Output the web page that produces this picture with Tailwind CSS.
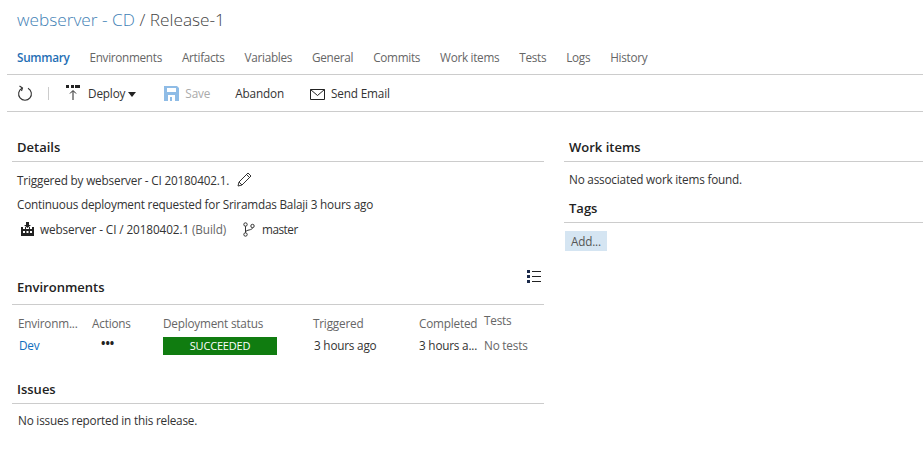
<!DOCTYPE html>
<html lang="en">
<head>
  <meta charset="UTF-8" />
  <title>webserver - CD / Release-1</title>
  <script src="https://cdn.jsdelivr.net/npm/@tailwindcss/browser@4"></script>
</head>
<body class="bg-white font-['Open_Sans',sans-serif] text-[11.75px] text-[#333] h-[452px] overflow-hidden">

<div class="pl-[17px] pt-[9px] h-[44px] text-[17.25px] leading-[22px] font-light text-[#444]">
  <span class="text-[#3f7fb5]">webserver - CD</span> / Release-1
</div>

<div class="ml-[7px] h-[31px] border-b border-[#ccc] pl-[10px] flex gap-[20px] items-start pt-[4px] leading-[18px] tracking-[-0.3px] text-[#666]">
  <span class="font-semibold text-[#1f6fb5]">Summary</span>
  <span>Environments</span>
  <span>Artifacts</span>
  <span>Variables</span>
  <span>General</span>
  <span>Commits</span>
  <span>Work items</span>
  <span>Tests</span>
  <span>Logs</span>
  <span>History</span>
</div>

<div class="ml-[7px] h-[37px] border-b border-[#ccc] flex items-center pt-[2px] tracking-[-0.15px]">
  <svg class="ml-[10px] -mt-[2px] w-[16px] h-[16px]" viewBox="0 0 16 16" fill="none" stroke="#333" stroke-width="1.100"><path d="M5 3.200A6.400 6.400 0 1 0 11 3.200"/><path d="M2.500 1 5.500 3 4.500 6"/></svg>
  <span class="ml-[15px] -mt-[2px] w-px h-[13px] bg-[#ccc]"></span>
  <svg class="ml-[17px] -mt-[2px] w-[15px] h-[16px]" viewBox="0 0 15 16"><path fill="#222" d="M0 0h3v3H0zM5 0h3v3H5zM9 0h5v3H9z"/><path stroke="#222" fill="none" d="M7 15V6M4 8.500l3-3 3 3"/></svg>
  <span class="ml-[7px]">Deploy</span>
  <svg class="ml-[3px] w-[8px] h-[5px]" viewBox="0 0 8 5"><path fill="#222" d="M0 0h8L4 5z"/></svg>
  <svg class="ml-[28px] -mt-[1px] w-[15px] h-[15px]" viewBox="0 0 15 15"><path fill="#8fbce6" d="M0 0h13l2 2v13H0z"/><path fill="#fff" d="M3 2h9v4H3zM4 9h7v6H4z"/><path fill="#8fbce6" d="M6 11h2v4H6z"/></svg>
  <span class="ml-[6px] text-[#aaa]">Save</span>
  <span class="ml-[25px]">Abandon</span>
  <svg class="ml-[26px] w-[15px] h-[11px]" viewBox="0 0 15 11" fill="none" stroke="#222"><path d="M.5.5h14v10H.5zM.5.5l7 6 7-6"/></svg>
  <span class="ml-[6px]">Send Email</span>
</div>

<div class="flex">
  <div class="w-[532px] ml-[12px] shrink-0">
    <h2 class="pl-[5px] pt-[26px] pb-[5px] border-b border-[#ccc] text-[13px] leading-[18px] font-semibold text-[#222]">Details</h2>
    <div class="pl-[5px] pt-[9px] leading-[18px] tracking-[-0.2px]">
      <div class="flex items-center h-[18px]"><span class="tracking-[-0.17px]">Triggered by webserver - CI 20180402.1.</span>
        <svg class="ml-[8px] -mt-[1px] w-[15px] h-[15px]" viewBox="0 0 15 15" fill="none" stroke="#333"><path d="M1 14l1-4L11 1l3 3-9 9zM2 10l3 3M9.500 2.500l3 3"/></svg>
      </div>
      <div class="mt-[6px] h-[18px]">Continuous deployment requested for Sriramdas Balaji 3 hours ago</div>
      <div class="mt-[7px] flex items-center h-[18px]">
        <svg class="ml-[4px] w-[13px] h-[14px]" viewBox="0 0 13 14"><path fill="#222" d="M5 0h3v3h2L6.500 6 3 3h2zM0 5h2v2h2V5h1v2h3V5h1v2h2V5h2v9H0z"/><path fill="#fff" d="M2 9h2v2H2zM5.500 9h2v2h-2zM9 9h2v2H9z"/></svg>
        <span class="ml-[6px] tracking-[-0.1px]">webserver - CI / 20180402.1 <span class="text-[#666]">(Build)</span></span>
        <svg class="ml-[17px] w-[12px] h-[15px]" viewBox="0 0 12 15" fill="none" stroke="#333"><circle cx="2.500" cy="2.500" r="1.700"/><circle cx="2.500" cy="12.500" r="1.700"/><circle cx="9.500" cy="4" r="1.700"/><path d="M2.500 4.200v6.600M9.500 5.700C9.500 8.500 3 7.500 2.500 10"/></svg>
        <span class="ml-[7px] tracking-[-0.5px]">master</span>
      </div>
    </div>

    <div class="mt-[31px] flex justify-end pr-[3px] h-[9px]">
      <svg class="w-[14px] h-[14px] shrink-0" viewBox="0 0 14 14"><path fill="#1b2a4a" d="M0 1h3v3H0zM0 6h3v3H0zM0 11h3v3H0z"/><path stroke="#222" d="M5 2.500h9M5 7.500h9M5 12.500h9"/></svg>
    </div>
    <h2 class="pl-[5px] pb-[8px] border-b border-[#ccc] text-[13px] leading-[18px] font-semibold text-[#222]">Environments</h2>
    <div class="grid grid-cols-[74px_71px_150px_106px_65px_1fr] pl-[6px] tracking-[-0.2px] mt-[7px]">
      <span class="pt-[2px] leading-[18px] text-[#666]">Environm...</span>
      <span class="pt-[2px] leading-[18px] text-[#666]">Actions</span>
      <span class="pt-[2px] leading-[18px] text-[#666]">Deployment status</span>
      <span class="pt-[2px] leading-[18px] text-[#666]">Triggered</span>
      <span class="pt-[2px] leading-[18px] text-[#666]">Completed</span>
      <span class="-mt-[1px] leading-[18px] text-[#666]">Tests</span>
      <span class="pt-[4px] pl-px leading-[18px] text-[#106ebe]">Dev</span>
      <span class="pt-[2px] pl-[9px] leading-[18px] font-bold text-[#222] tracking-[0]">•••</span>
      <span class="pt-[5px]"><span class="flex w-[114px] h-[18px] bg-[#107c10] text-white items-center justify-center text-[11px]">SUCCEEDED</span></span>
      <span class="pt-[4px] pl-px leading-[18px]">3 hours ago</span>
      <span class="pt-[4px] leading-[18px]">3 hours a...</span>
      <span class="pt-[4px] leading-[18px] text-[#666]">No tests</span>
    </div>

    <h2 class="mt-[25px] pl-[5px] pb-[5px] border-b border-[#ccc] text-[13px] leading-[18px] font-semibold text-[#222]">Issues</h2>
    <p class="pl-[6px] pt-[7px] leading-[18px] tracking-[-0.2px]">No issues reported in this release.</p>
  </div>

  <div class="ml-[20px] flex-1">
    <h2 class="pl-[5px] pt-[26px] pb-[5px] border-b border-[#ccc] text-[13px] leading-[18px] font-semibold text-[#222]">Work items</h2>
    <p class="pl-[5px] pt-[8px] leading-[18px] tracking-[-0.2px]">No associated work items found.</p>
    <h2 class="mt-[11px] pl-[5px] pb-[5px] border-b border-[#ccc] text-[13px] leading-[18px] font-semibold text-[#222]">Tags</h2>
    <span class="inline-block mt-[8px] ml-px px-[6px] h-[20px] leading-[20px] bg-[#d5e5f2] text-[#555] tracking-[-0.2px]">Add...</span>
  </div>
</div>

</body>
</html>
